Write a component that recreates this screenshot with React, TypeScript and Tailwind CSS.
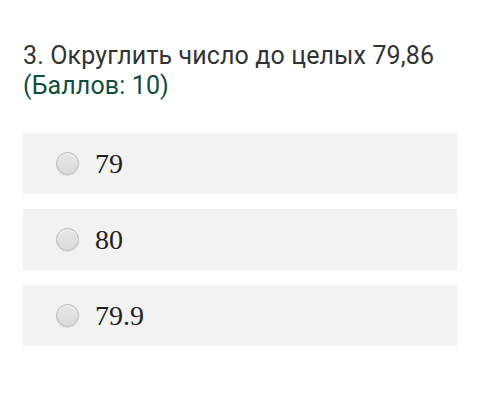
export default function App() {
  const options = ["79", "80", "79.9"];
  return (
    <div className="w-[480px] h-[420px] bg-white px-[23px] pt-[41px]">
      <div className="text-[25px] leading-[30px] tracking-[0.12px] text-[#333333]" style={{ fontFamily: "Roboto, sans-serif" }}>
        <div>3. Округлить число до целых 79,86</div>
        <div className="text-[#0f4d3e]">(Баллов: 10)</div>
      </div>
      <div className="mt-[32px] flex flex-col gap-[15px]">
        {options.map((o) => (
          <div key={o} className="h-[61px] bg-[#f2f2f2] flex items-center pl-[33px]">
            <span className="w-[23px] h-[23px] rounded-full border border-[#b8b8b8] bg-[linear-gradient(#e8e8e8,#d9d9d9)] shadow-[inset_0_1px_1px_rgba(255,255,255,0.6),0_1px_1px_rgba(0,0,0,0.08)]" />
            <span className="ml-[16px] text-[28px] text-[#222222] leading-none" style={{ fontFamily: '"Liberation Serif", serif' }}>
              {o}
            </span>
          </div>
        ))}
      </div>
    </div>
  );
}
